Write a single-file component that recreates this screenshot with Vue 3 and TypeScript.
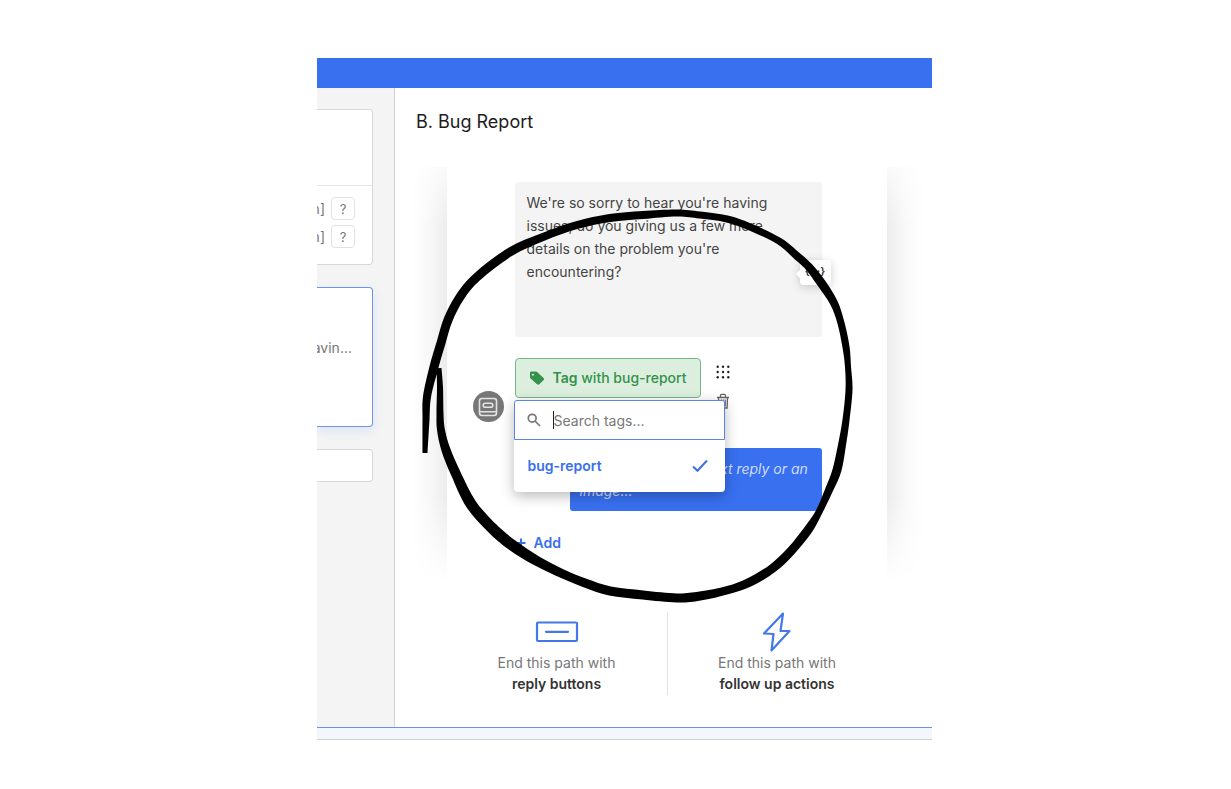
<script setup lang="ts">
import { ref } from 'vue'

type BrushPoint = [x: number, y: number, width: number]

const message = ref(
  "We're so sorry to hear you're having issues, do you giving us a few more details on the problem you're encountering?",
)
const reply = ref('')
const query = ref('')
const tags = ['bug-report']
const fields = ['n]', 'n]']

const loop: BrushPoint[] = [
  [425, 453, 5], [426, 420, 7], [427, 397, 8], [434, 367, 9], [441, 343, 9],
  [448, 320, 9], [460, 297, 9], [477, 277, 9], [510, 252, 9], [543, 237, 8],
  [577, 225, 8], [610, 218, 8], [643, 215, 8], [677, 213, 7], [700, 215, 7],
  [727, 219, 7], [750, 227, 7], [779, 241, 7], [797, 256, 8], [809, 267, 8],
  [822, 284, 9], [834, 303, 8], [841, 323, 7], [846, 347, 7], [848, 367, 6],
  [849, 390, 7], [846, 420, 7], [842, 445, 8], [837, 470, 9], [829, 490, 8],
  [819, 512, 7], [808, 530, 9], [791, 551, 9], [773, 568, 9], [750, 582, 9],
  [728, 590, 8], [700, 596, 9], [677, 598, 9], [643, 595, 9], [610, 591, 9],
  [585, 583, 9], [563, 574, 9], [537, 561, 10], [512, 545, 11], [492, 528, 11],
  [471, 504, 11], [456, 474, 10], [446, 450, 9], [441, 430, 8], [440, 413, 7],
  [440, 387, 6], [439, 368, 5],
]

function curve(points: number[][]): string {
  const at = (i: number) => points[Math.max(0, Math.min(points.length - 1, i))]
  let d = ''
  for (let i = 0; i < points.length - 1; i++) {
    const [p0, p1, p2, p3] = [at(i - 1), at(i), at(i + 1), at(i + 2)]
    const c = [
      p1[0] + (p2[0] - p0[0]) / 6, p1[1] + (p2[1] - p0[1]) / 6,
      p2[0] - (p3[0] - p1[0]) / 6, p2[1] - (p3[1] - p1[1]) / 6,
      p2[0], p2[1],
    ]
    d += ' C' + c.map((n) => n.toFixed(1)).join(' ')
  }
  return d
}

function ribbon(points: BrushPoint[]): string {
  const side = (sign: number) =>
    points.map(([x, y, w], i) => {
      const a = points[Math.max(0, i - 1)]
      const b = points[Math.min(points.length - 1, i + 1)]
      const len = Math.hypot(b[0] - a[0], b[1] - a[1])
      return [x - (sign * (b[1] - a[1]) * w) / len / 2, y + (sign * (b[0] - a[0]) * w) / len / 2]
    })
  const left = side(1)
  const right = side(-1).reverse()
  return `M${left[0].join(' ')}${curve(left)} L${right[0].join(' ')}${curve(right)} Z`
}

const brush = ribbon(loop)
</script>

<template>
  <div class="page">
    <div class="frame">
      <header class="topbar"></header>
      <div class="body">
        <aside class="sidebar">
          <section class="step step-fields">
            <div v-for="(field, i) in fields" :key="i" class="field">
              <span>{{ field }}</span>
              <button type="button" class="help">?</button>
            </div>
          </section>
          <section class="step step-active">
            <span>avin...</span>
          </section>
          <section class="step step-empty"></section>
        </aside>

        <main class="main">
          <h1>B. Bug Report</h1>
          <section class="card">
            <div class="message-wrap">
              <textarea v-model="message" class="message" aria-label="Message"></textarea>
              <button type="button" class="variable" aria-label="Insert variable">{···}</button>
            </div>

            <div class="tag-row">
              <span class="avatar">
                <svg width="20" height="20" viewBox="0 0 20 20" fill="none" stroke="#e4e4e4" stroke-width="1.600" stroke-linecap="round" stroke-linejoin="round">
                  <rect x="1.500" y="1.500" width="17" height="17" rx="2.500" />
                  <path d="M2 14.800h16" />
                  <rect x="5.200" y="6.300" width="9.600" height="4" rx="2" />
                </svg>
              </span>
              <button type="button" class="tag">
                <svg width="16" height="16" viewBox="0 0 16 16">
                  <path fill="#35914b" fill-rule="evenodd" d="M1 3v4c0 .6.200 1.100.6 1.500l6.500 5.700c.7.600 1.600.6 2.200 0l4.400-4.200c.6-.6.6-1.500-.1-2.100L8.400 2.200c-.4-.4-.9-.6-1.500-.6H2.500C1.600 1.600 1 2.200 1 3Zm2.900.7a1 1 0 1 1 0 2 1 1 0 0 1 0-2Z" />
                </svg>
                <span><strong>Tag</strong> with bug-report</span>
              </button>
              <div class="tools">
                <button type="button" aria-label="Drag">
                  <svg width="14" height="14" viewBox="0 0 14 14" fill="#222">
                    <template v-for="y in 3" :key="y">
                      <circle v-for="x in 3" :key="x" :cx="x * 5.300 - 3.600" :cy="y * 5.300 - 3.600" r="1.200" />
                    </template>
                  </svg>
                </button>
                <button type="button" aria-label="Delete">
                  <svg width="14" height="16" viewBox="0 0 14 16" fill="none" stroke="#666" stroke-width="1.300">
                    <path d="M1 4.500h12M4.500 4.500V2.700c0-.8.500-1.300 1.300-1.300h2.400c.8 0 1.300.5 1.300 1.300v1.800M2.500 4.500l.4 10.500h8.200l.4-10.500M5.300 6.500v7M7.200 6.500v7M9.200 6.500v7" />
                  </svg>
                </button>
              </div>

              <div class="dropdown">
                <label class="search">
                  <svg width="14" height="14" viewBox="0 0 14 14" fill="none" stroke="#777" stroke-width="1.700">
                    <circle cx="5.200" cy="5.200" r="3.900" />
                    <path d="m8 8 5 5" />
                  </svg>
                  <span class="caret"></span>
                  <input v-model="query" type="text" placeholder="Search tags..." aria-label="Search tags" />
                </label>
                <button v-for="tag in tags" :key="tag" type="button" class="option">
                  <span>{{ tag }}</span>
                  <svg width="16" height="14" viewBox="0 0 16 14" fill="none" stroke="#3d70e0" stroke-width="2">
                    <path d="m1 7.500 4.500 4.300L15 1.500" />
                  </svg>
                </button>
              </div>
            </div>

            <textarea v-model="reply" class="reply" placeholder="Continue on with a text reply or an image..." aria-label="Reply"></textarea>
            <button type="button" class="add">
              <svg width="12" height="12" viewBox="0 0 12 12" stroke="#3870ee" stroke-width="2"><path d="M6 1.500v9M1.500 6h9" /></svg>
              <span>Add</span>
            </button>

            <svg class="loop" width="450" height="410" viewBox="412 200 450 410" aria-hidden="true">
              <path :d="brush" />
            </svg>
          </section>

          <div class="endings">
            <button type="button" class="ending">
              <svg width="44" height="40" viewBox="0 0 44 40" fill="none" stroke="#4378e8" stroke-width="2.200" stroke-linecap="round">
                <rect x="2" y="10.500" width="40" height="18.500" rx="1" />
                <path d="M11 19.800h22" />
              </svg>
              <span>End this path with</span>
              <strong>reply buttons</strong>
            </button>
            <button type="button" class="ending">
              <svg width="44" height="40" viewBox="0 0 44 40" fill="none" stroke="#4378e8" stroke-width="2.200" stroke-linejoin="round">
                <path d="M28 1.500 9 21.500l9.500.5L16.500 38.500 34.500 19H25.500Z" />
              </svg>
              <span>End this path with</span>
              <strong>follow up actions</strong>
            </button>
          </div>
        </main>
      </div>
      <footer class="bottom"></footer>
    </div>
  </div>
</template>

<style>
body {
  margin: 0;
  background: #fff;
}
</style>

<style scoped>
* {
  box-sizing: border-box;
}

.page {
  display: grid;
  grid-template-columns: 317fr 615fr 299fr;
  padding: 58px 0 48px;
  font-family: Inter, "Liberation Sans", sans-serif;
  font-size: 14px;
  line-height: 20px;
  color: #444;
}

.frame {
  grid-column: 2;
  min-width: 0;
  overflow: hidden;
}

button,
input,
textarea {
  margin: 0;
  padding: 0;
  border: 0;
  background: none;
  color: inherit;
  font: inherit;
  outline: none;
}

svg {
  display: block;
  flex: none;
}

.topbar {
  height: 30px;
  background: #3870f0;
}

.body {
  display: flex;
}

.sidebar {
  display: flex;
  flex: none;
  flex-direction: column;
  gap: 22px;
  width: 78px;
  padding: 21px 21px 0 0;
  overflow: hidden;
  background: #f4f4f4;
  border-right: 1px solid #d2d2d2;
}

.step {
  flex: none;
  background: #fff;
  border: 1px solid #d8d8d8;
  border-left: 0;
  border-radius: 0 4px 4px 0;
}

.step-fields {
  height: 156px;
  padding-top: 76px;
  background: linear-gradient(#e8e8e8, #e8e8e8) 0 75px / 100% 1px no-repeat #fff;
}

.field {
  display: flex;
  align-items: center;
  justify-content: flex-end;
  gap: 6px;
  margin: 11px 17px -6px 0;
  color: #777;
}

.field + .field {
  margin-top: 11px;
}

.help {
  flex: none;
  width: 24px;
  height: 23px;
  border: 1px solid #e2e2e2;
  border-radius: 4px;
  font-size: 13px;
  color: #777;
}

.step-active {
  display: flex;
  align-items: center;
  justify-content: flex-end;
  height: 140px;
  padding: 0 20px 19px 0;
  border-color: #6c94f2;
  box-shadow: 0 4px 12px rgba(56, 112, 240, 0.12);
  color: #777;
}

.step-empty {
  height: 33px;
}

.main {
  flex: 1;
  min-width: 0;
  padding: 22px 0 32px;
}

h1 {
  margin: 0 0 33px 21px;
  font-size: 18px;
  font-weight: 400;
  line-height: 24px;
  color: #1c1c1c;
}

.card {
  position: relative;
  width: 440px;
  margin: 0 auto;
  left: 3px;
  padding: 15px 65px 28px 68px;
}

.card::before,
.card::after {
  content: "";
  position: absolute;
  top: 0;
  bottom: 0;
  width: 36px;
  -webkit-mask-image: linear-gradient(rgba(0, 0, 0, 0.3), #000 60px, #000 330px, transparent);
  mask-image: linear-gradient(rgba(0, 0, 0, 0.3), #000 60px, #000 330px, transparent);
}

.card::before {
  right: 100%;
  background: linear-gradient(to left, #ececec, #f8f8f8 50%, #fff);
}

.card::after {
  left: 100%;
  background: linear-gradient(to right, #ececec, #f8f8f8 50%, #fff);
}

.message-wrap {
  position: relative;
}

.message {
  display: block;
  width: 100%;
  height: 155px;
  padding: 9px 12px;
  border-radius: 3px;
  background: #f4f4f4;
  line-height: 23px;
  resize: none;
  overflow: hidden;
}

.variable {
  position: absolute;
  top: 78px;
  right: -9px;
  width: 31px;
  height: 25px;
  padding-bottom: 4px;
  border-radius: 4px;
  background: #fff;
  box-shadow: 0 2px 10px rgba(0, 0, 0, 0.2);
  font-size: 11px;
  font-weight: 600;
  line-height: 20px;
  color: #333;
}

.variable::before {
  content: "";
  position: absolute;
  top: 10px;
  left: -4px;
  border: 4px solid transparent;
  border-left: 0;
  border-right-color: #fff;
}

.tag-row {
  position: relative;
  display: flex;
  align-items: flex-start;
  gap: 15px;
  height: 40px;
  margin: 21px 0 50px;
}

.avatar {
  position: absolute;
  top: 33px;
  left: -42px;
  display: grid;
  place-items: center;
  width: 31px;
  height: 31px;
  border-radius: 50%;
  background: #777;
}

.tag {
  display: flex;
  align-items: center;
  gap: 8px;
  height: 40px;
  padding: 0 14px 0 13px;
  border: 1px solid #72b982;
  border-radius: 4px;
  background: #dcefdf;
  color: #35914b;
  font-weight: 500;
  white-space: nowrap;
}

.tag strong {
  font-weight: 600;
}

.tools {
  display: grid;
  gap: 14px;
  padding-top: 7px;
}

.dropdown {
  position: absolute;
  z-index: 1;
  top: 42px;
  left: -1px;
  width: 211px;
  border-radius: 4px;
  background: #fff;
  box-shadow: 0 4px 14px rgba(0, 0, 0, 0.28);
}

.search {
  display: flex;
  align-items: center;
  height: 40px;
  padding: 0 12px;
  border: 1px solid #5b85e4;
  border-radius: 3px 3px 0 0;
}

.caret {
  flex: none;
  width: 1px;
  height: 18px;
  margin-left: 12px;
  background: #222;
}

.search input {
  width: 100%;
  min-width: 0;
  padding-top: 1px;
}

.search input::placeholder {
  color: #777;
  opacity: 1;
}

.option {
  display: flex;
  align-items: center;
  justify-content: space-between;
  width: 100%;
  height: 52px;
  padding: 0 17px 0 14px;
  font-weight: 600;
  color: #3870ee;
}

.reply {
  display: block;
  width: 252px;
  height: 63px;
  margin-left: auto;
  padding: 10px;
  border-radius: 3px;
  background: #3870f0;
  color: #fff;
  font-style: italic;
  line-height: 22px;
  resize: none;
  overflow: hidden;
}

.reply::placeholder {
  color: #cfdcff;
  opacity: 1;
}

.add {
  display: flex;
  align-items: center;
  gap: 7px;
  margin-top: 22px;
  font-weight: 600;
  color: #3870ee;
}

.loop {
  position: absolute;
  z-index: 2;
  top: 33px;
  left: -35px;
  pointer-events: none;
}

.endings {
  position: relative;
  left: 3px;
  display: grid;
  grid-template-columns: 1fr 1fr;
  width: 440px;
  margin: 31px auto 0;
}

.ending {
  display: flex;
  flex-direction: column;
  align-items: center;
  height: 83px;
  line-height: 21px;
  color: #777;
}

.ending + .ending {
  border-left: 1px solid #e2e2e2;
}

.ending strong {
  font-weight: 600;
  color: #333;
}

.bottom {
  height: 13px;
  border-top: 1px solid #6c90f2;
  border-bottom: 1px solid #d0d0d8;
  background: #f2f6fd;
}
</style>
